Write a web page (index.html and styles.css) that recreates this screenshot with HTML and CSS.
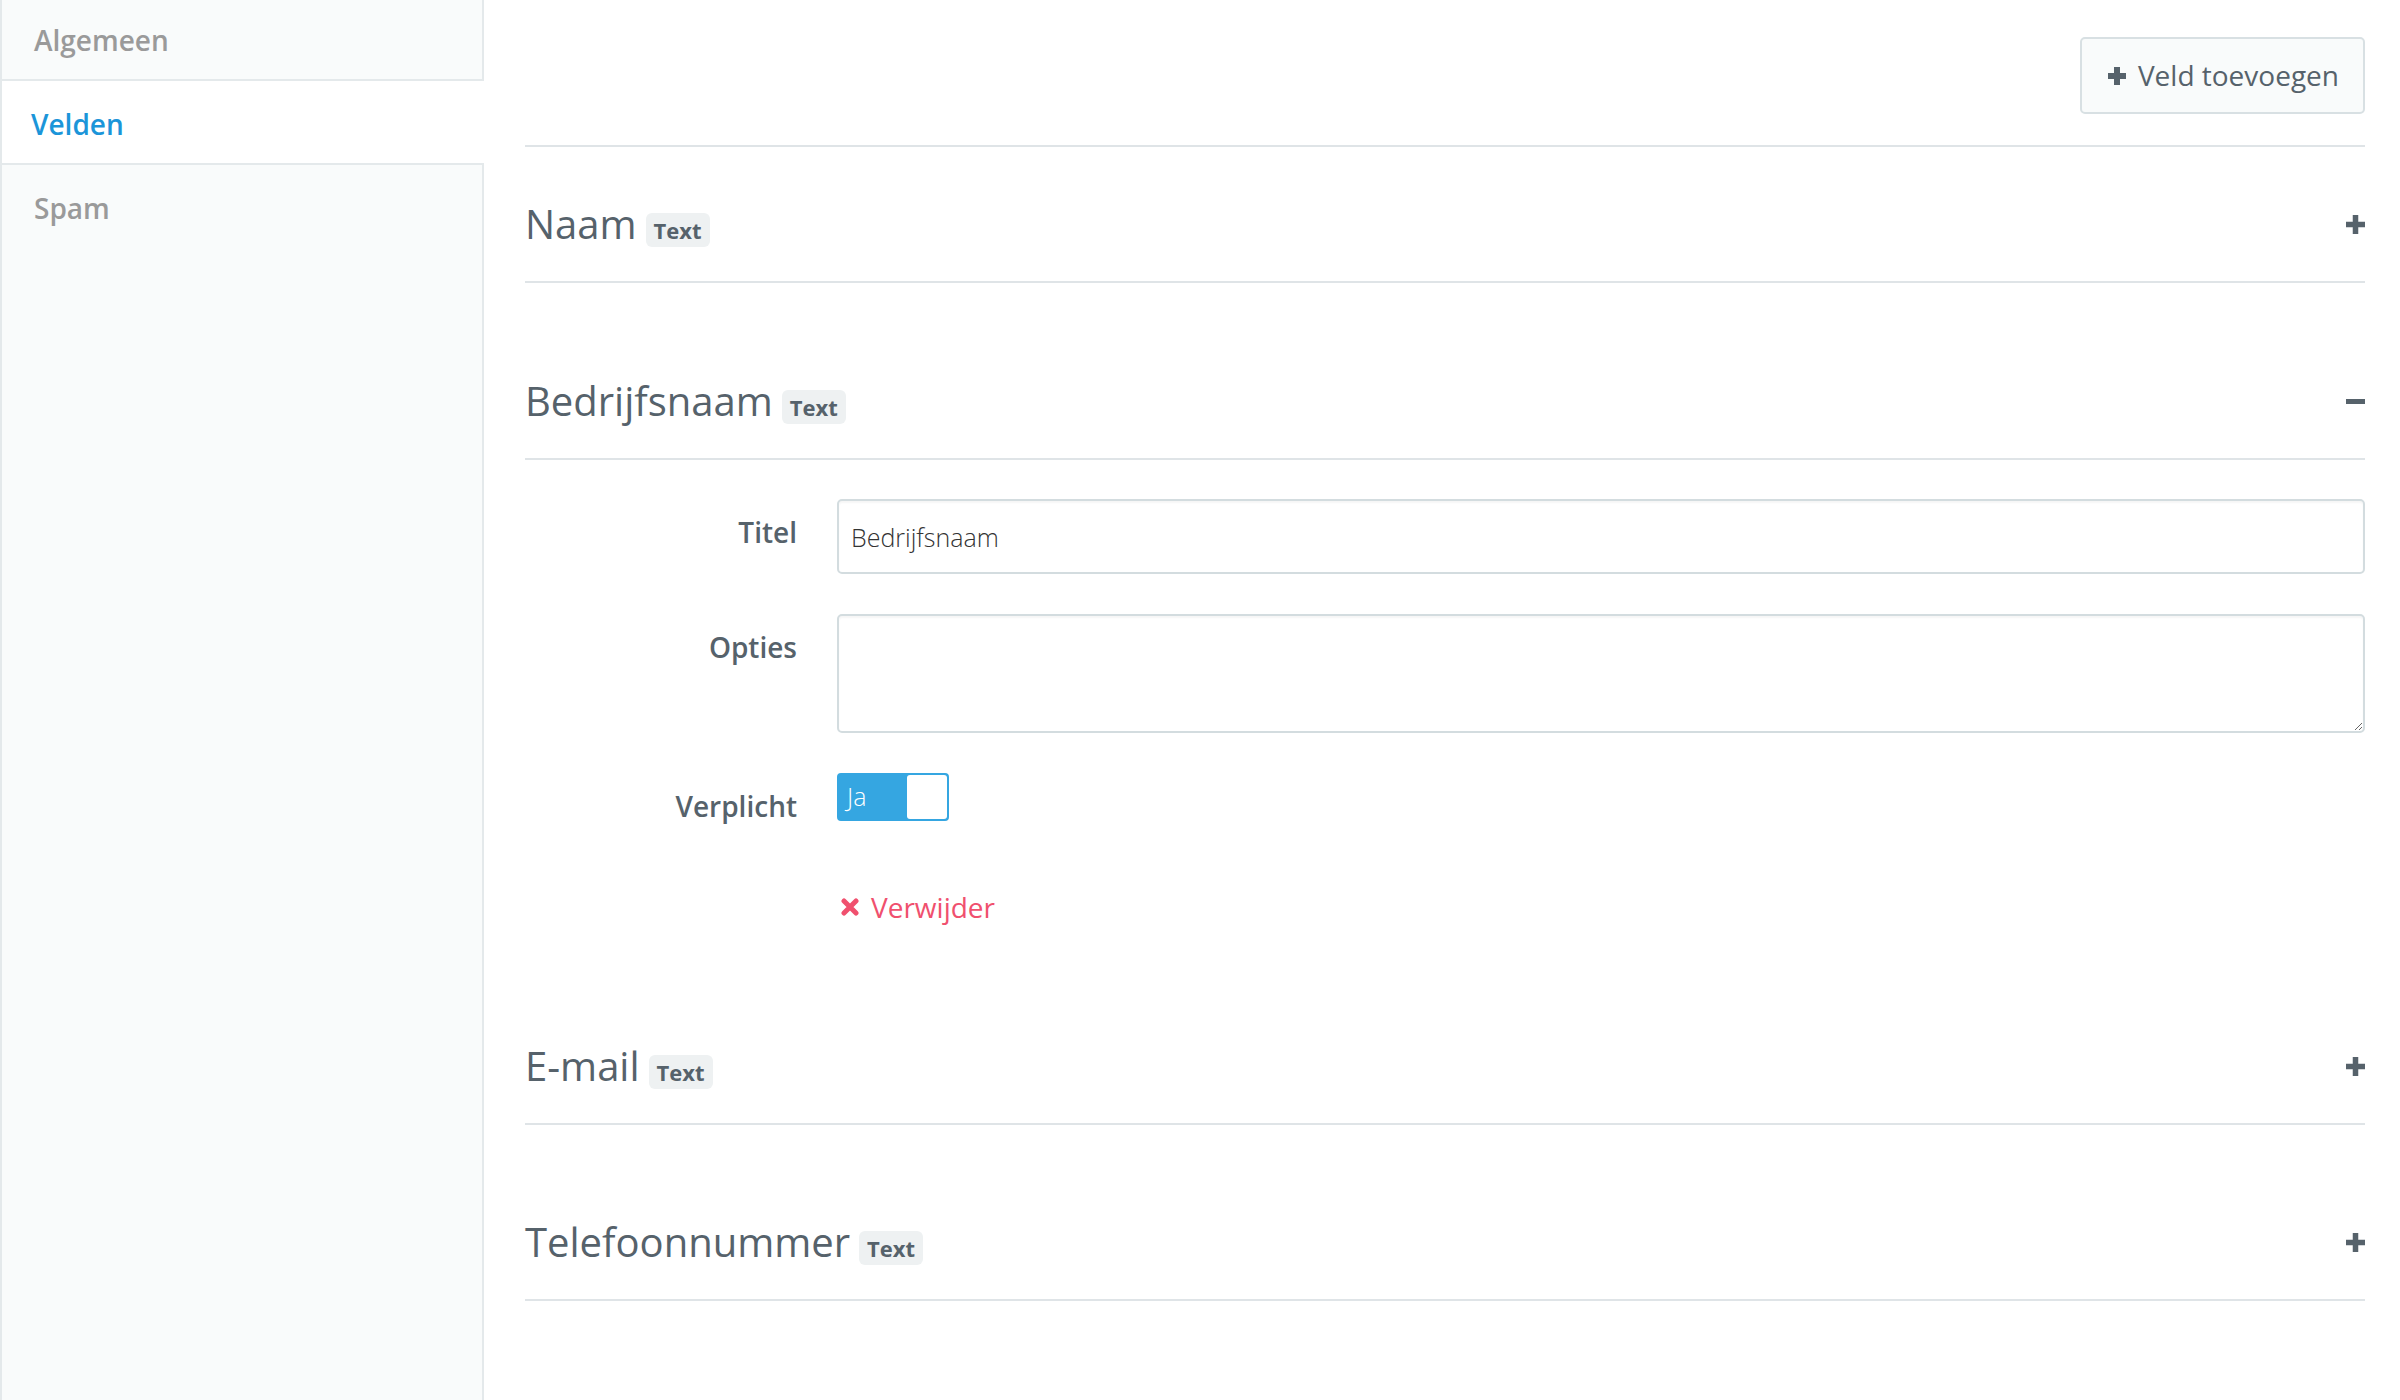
FILE: index.html
```html
<!DOCTYPE html>
<html lang="nl">
<head>
<meta charset="utf-8">
<title>Formulier velden</title>
<link rel="stylesheet" href="styles.css">
</head>
<body>
<div class="page">
  <nav class="sidebar">
    <a class="nav-item first">Algemeen</a>
    <a class="nav-item active">Velden</a>
    <a class="nav-item last">Spam</a>
  </nav>
  <main class="content">
    <div class="toolbar">
      <button class="btn-add">
        <svg class="ico-plus-btn" viewBox="0 0 22 22" width="22" height="22"><path d="M11 2v18M2 11h18" stroke="#56626b" stroke-width="6"/></svg>
        <span>Veld toevoegen</span>
      </button>
    </div>

    <section class="field first">
      <div class="field-head">
        <h3 class="field-title">Naam<span class="badge">Text</span></h3>
        <svg class="ico-toggle" viewBox="0 0 19 19" width="19" height="19"><path d="M9.5 0v19M0 9.5h19" stroke="#56626b" stroke-width="5.5"/></svg>
      </div>
    </section>

    <section class="field open">
      <div class="field-head">
        <h3 class="field-title">Bedrijfsnaam<span class="badge">Text</span></h3>
        <svg class="ico-toggle" viewBox="0 0 19 19" width="19" height="19"><path d="M0 9.5h19" stroke="#56626b" stroke-width="5"/></svg>
      </div>
      <div class="field-body">
        <div class="form-row">
          <label class="form-label">Titel</label>
          <input class="form-input" type="text" value="Bedrijfsnaam">
        </div>
        <div class="form-row">
          <label class="form-label">Opties</label>
          <textarea class="form-textarea"></textarea>
        </div>
        <div class="form-row">
          <label class="form-label">Verplicht</label>
          <div class="switch">
            <span class="switch-on">Ja</span>
            <span class="switch-knob"></span>
          </div>
        </div>
        <div class="form-row delete-row">
          <span class="form-label"></span>
          <a class="delete">
            <svg class="ico-x" viewBox="0 0 18 18" width="18" height="18"><path d="M3 3l12 12M15 3L3 15" stroke="#f0506e" stroke-width="5" stroke-linecap="round"/></svg>
            <span>Verwijder</span>
          </a>
        </div>
      </div>
    </section>

    <section class="field">
      <div class="field-head">
        <h3 class="field-title">E-mail<span class="badge">Text</span></h3>
        <svg class="ico-toggle" viewBox="0 0 19 19" width="19" height="19"><path d="M9.5 0v19M0 9.5h19" stroke="#56626b" stroke-width="5.5"/></svg>
      </div>
    </section>

    <section class="field">
      <div class="field-head">
        <h3 class="field-title">Telefoonnummer<span class="badge">Text</span></h3>
        <svg class="ico-toggle" viewBox="0 0 19 19" width="19" height="19"><path d="M9.5 0v19M0 9.5h19" stroke="#56626b" stroke-width="5.5"/></svg>
      </div>
    </section>
  </main>
</div>
</body>
</html>
```

FILE: styles.css
```css
* { box-sizing: border-box; }

html, body {
  margin: 0;
  padding: 0;
  height: 1400px;
  overflow: hidden;
  background: #ffffff;
  font-family: "Open Sans", "Liberation Sans", sans-serif;
  font-size: 28px;
  color: #56626b;
}

.page {
  display: flex;
  height: 1400px;
}

/* Sidebar */
.sidebar {
  width: 484px;
  flex: 0 0 484px;
  display: flex;
  flex-direction: column;
  background: #f9fbfb;
  border-left: 2px solid #e4e9eb;
  border-right: 2px solid #e4e9eb;
}

.nav-item {
  display: block;
  padding: 23px 32px 19px;
  line-height: 40px;
  font-weight: 600;
  color: #9a9a9a;
  border-bottom: 2px solid #e4e9eb;
}

.nav-item.first {
  padding-top: 20px;
}

.nav-item.active {
  background: #ffffff;
  color: #1b95d9;
  margin-right: -2px;
  padding-left: 29px;
}

.nav-item.last {
  border-bottom: none;
}

/* Content */
.content {
  flex: 1;
  padding: 0 35px 0 41px;
}

.toolbar {
  display: flex;
  justify-content: flex-end;
  align-items: flex-start;
  height: 147px;
  padding-top: 37px;
  border-bottom: 2px solid #dfe4e7;
}

.btn-add {
  display: flex;
  align-items: center;
  gap: 10px;
  padding: 17px 24px;
  border: 2px solid #d8e0e3;
  border-radius: 5px;
  background: #f9fbfb;
  font-family: inherit;
  font-size: 28px;
  line-height: 39px;
  color: #56626b;
}

.ico-plus-btn {
  display: block;
}

.field {
  padding-top: 89px;
}

.field.first {
  padding-top: 49px;
}

.field.open {
  padding-top: 90px;
}

.field-head {
  display: flex;
  align-items: center;
  justify-content: space-between;
  padding-bottom: 29px;
  border-bottom: 2px solid #dfe4e7;
}

.field-title {
  margin: 0;
  font-size: 40px;
  line-height: 56px;
  font-weight: 400;
  color: #56626b;
}

.badge {
  display: inline-block;
  margin-left: 9px;
  padding: 0 8px;
  line-height: 34px;
  border-radius: 6px;
  background: #eef1f2;
  font-size: 22px;
  font-weight: 700;
  color: #56626b;
}

.ico-toggle {
  display: block;
}

/* Body */
.field-body {
  padding: 39px 0 23px;
}

.form-row {
  display: grid;
  grid-template-columns: 272px 1fr;
  column-gap: 40px;
  align-items: start;
  margin-bottom: 40px;
}

.form-label {
  display: block;
  text-align: right;
  padding-top: 14px;
  line-height: 38px;
  font-weight: 600;
  color: #56626b;
}

.form-input,
.form-textarea {
  display: block;
  width: 100%;
  border: 2px solid #d3dcdf;
  border-radius: 5px;
  box-shadow: inset 0 2px 2px rgba(0, 0, 0, 0.04);
  font-family: "Open Sans", "Liberation Sans", sans-serif;
  font-weight: 300;
  font-size: 25px;
  color: #333333;
  background: #ffffff;
}

.form-input {
  height: 75px;
  padding: 0 12px;
}

.form-textarea {
  height: 119px;
  padding: 10px 13px;
}

.switch {
  display: flex;
  width: 112px;
  height: 48px;
  border: 2px solid #35a6e1;
  border-radius: 4px;
  background: #35a6e1;
}

.switch-on {
  flex: 1;
  padding-left: 8px;
  line-height: 42px;
  font-size: 25px;
  font-weight: 300;
  color: #ffffff;
}

.switch-knob {
  width: 40px;
  background: #ffffff;
  border-radius: 3px;
}

.delete-row {
  margin-top: 48px;
  margin-bottom: 0;
}

.delete {
  display: flex;
  align-items: center;
  gap: 12px;
  padding-left: 4px;
  padding-top: 15px;
  line-height: 38px;
  color: #f0506e;
}

.ico-x {
  display: block;
}
```
